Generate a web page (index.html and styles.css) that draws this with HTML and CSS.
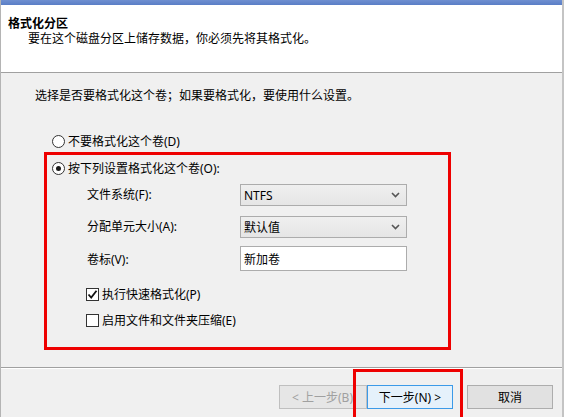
FILE: index.html
```html
<!DOCTYPE html>
<html lang="zh-CN">
<head>
<meta charset="UTF-8">
<title>格式化分区</title>
<link rel="stylesheet" href="styles.css">
</head>
<body>
<div class="wizard">
  <div class="titlebar"></div>

  <div class="header">
    <div class="header-title">格式化分区</div>
    <div class="header-sub">要在这个磁盘分区上储存数据，你必须先将其格式化。</div>
  </div>

  <div class="content">
    <p class="intro">选择是否要格式化这个卷；如果要格式化，要使用什么设置。</p>

    <label class="radio">
      <span class="radio-dot"></span>不要格式化这个卷(D)
    </label>

    <div class="options">
      <label class="radio">
        <span class="radio-dot checked"></span>按下列设置格式化这个卷(O):
      </label>

      <div class="form">
        <span class="form-label">文件系统(F):</span>
        <div class="select">
          <span>NTFS</span>
          <svg width="9" height="6" viewBox="0 0 9 6"><path d="M1 1 L4.5 4.5 L8 1" fill="none" stroke="#555" stroke-width="1.6"/></svg>
        </div>

        <span class="form-label">分配单元大小(A):</span>
        <div class="select">
          <span>默认值</span>
          <svg width="9" height="6" viewBox="0 0 9 6"><path d="M1 1 L4.5 4.5 L8 1" fill="none" stroke="#555" stroke-width="1.6"/></svg>
        </div>

        <span class="form-label">卷标(V):</span>
        <div class="textbox">新加卷</div>
      </div>

      <div class="checks">
        <label class="check">
          <span class="check-box">
            <svg width="11" height="11" viewBox="0 0 11 11"><path d="M1.5 5.5 L4.2 8.5 L9.5 1.8" fill="none" stroke="#111" stroke-width="1.8"/></svg>
          </span>执行快速格式化(P)
        </label>
        <label class="check">
          <span class="check-box"></span>启用文件和文件夹压缩(E)
        </label>
      </div>
    </div>
  </div>

  <div class="footer">
    <button class="btn disabled">&lt; 上一步(B)</button>
    <button class="btn primary">下一步(N) &gt;</button>
    <button class="btn cancel">取消</button>
  </div>

  <!-- red highlight boxes -->
  <div class="mark mark-options"></div>
  <div class="mark mark-next"></div>
</div>
</body>
</html>
```

FILE: styles.css
```css
body {
  margin: 0;
  padding: 0;
  font-family: "Segoe UI", "Noto Sans", "Noto Sans CJK SC", sans-serif;
  font-size: 12px;
  color: #000000;
  background: #f0f0f0;
}

.wizard {
  position: relative;
  width: 564px;
  height: 417px;
  box-sizing: border-box;
  border-left: 1px solid #b4b4b4;
  border-right: 2px solid #c4c4c4;
  background: #f0f0f0;
  display: flex;
  flex-direction: column;
  overflow: hidden;
}

.titlebar {
  height: 5px;
  background: linear-gradient(#6f8fd0, #5a7ec6);
  margin-right: -2px;
}

/* White header */
.header {
  background: #ffffff;
  height: 68px;
  box-sizing: border-box;
  padding: 10px 0 0 7px;
  border-bottom: 1px solid #a0a0a0;
}

.header-title {
  font-weight: bold;
  line-height: 17px;
}

.header-sub {
  padding-left: 20px;
  line-height: 17px;
  margin-top: -2px;
}

/* Main area */
.content {
  flex: 1;
  padding: 0 0 0 34px;
}

.intro {
  margin: 15px 0 0 0;
  line-height: 16px;
}

.radio {
  display: flex;
  align-items: center;
  height: 16px;
  margin-top: 29px;
  margin-left: 17px;
}

.radio-dot {
  width: 11px;
  height: 11px;
  border: 1px solid #333333;
  border-radius: 50%;
  background: #ffffff;
  margin-right: 3px;
  position: relative;
}

.radio-dot.checked::after {
  content: "";
  position: absolute;
  left: 3px;
  top: 3px;
  width: 5px;
  height: 5px;
  border-radius: 50%;
  background: #1a1a1a;
}

.options .radio {
  margin-top: 11px;
}

.form {
  display: grid;
  grid-template-columns: 153px 167px;
  row-gap: 10px;
  margin: 8px 0 0 52px;
  align-items: center;
}

.form-label {
  line-height: 16px;
}

.select {
  height: 22px;
  box-sizing: border-box;
  border: 1px solid #acacac;
  background: linear-gradient(#efefef, #e5e5e5);
  display: flex;
  align-items: center;
  justify-content: space-between;
  padding: 0 6px 0 3px;
}

.textbox {
  height: 25px;
  box-sizing: border-box;
  border: 1px solid #acacac;
  background: #ffffff;
  display: flex;
  align-items: center;
  padding-left: 3px;
  margin-top: -2px;
}

.checks {
  margin: 15px 0 0 51px;
}

.check {
  display: flex;
  align-items: center;
  height: 16px;
  margin-bottom: 10px;
}

.check-box {
  width: 11px;
  height: 11px;
  border: 1px solid #333333;
  background: #ffffff;
  margin-right: 3px;
  display: flex;
  align-items: center;
  justify-content: center;
}

/* Button row */
.footer {
  height: 50px;
  box-sizing: border-box;
  border-top: 1px solid #a0a0a0;
  box-shadow: inset 0 1px 0 #ffffff;
  display: flex;
  justify-content: flex-end;
  align-items: flex-start;
  padding: 17px 9px 0 0;
  gap: 14px;
}

.btn {
  font-family: inherit;
  font-size: 12px;
  width: 86px;
  height: 24px;
  border: 1px solid #adadad;
  background: #e1e1e1;
  color: #000000;
  padding: 0;
}

.btn.disabled {
  color: #a0a0a0;
  border-color: #bfbfbf;
  background: #e6e6e6;
  margin-right: -14px;
  width: 88px;
  text-align: left;
  padding-left: 12px;
}

.btn.primary {
  border-color: #3c9ae8;
  background: #e5f1fb;
}

.mark {
  position: absolute;
  border: 3px solid #ee0000;
  pointer-events: none;
}

.mark-options {
  left: 43px;
  top: 152px;
  width: 401px;
  height: 192px;
}

.mark-next {
  left: 352px;
  top: 369px;
  width: 104px;
  height: 60px;
}
```
